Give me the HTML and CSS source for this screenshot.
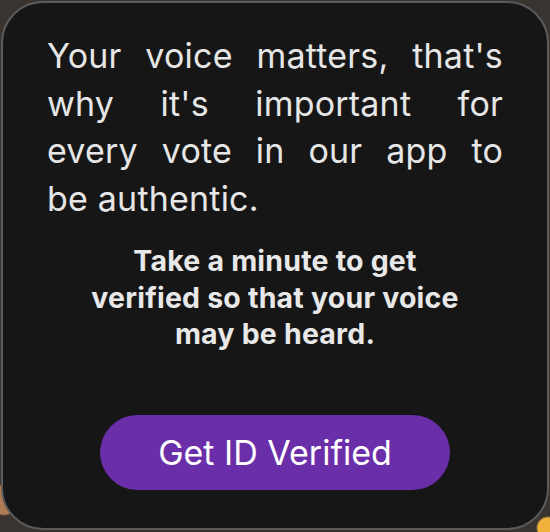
FILE: index.html
```html
<!DOCTYPE html>
<html>
<head>
<meta charset="utf-8">
<link rel="stylesheet" href="styles.css">
</head>
<body>
<div class="backdrop">
  <div class="card">
    <p class="lead">
      <span class="line">Your voice matters, that's</span>
      <span class="line">why it's important for</span>
      <span class="line">every vote in our app to</span>
      <span class="line last">be authentic.</span>
    </p>
    <p class="sub">Take a minute to get verified so that your voice may be heard.</p>
    <button class="cta">Get ID Verified</button>
  </div>
</div>
</body>
</html>
```
FILE: styles.css
```css
html, body {
  margin: 0;
  padding: 0;
  width: 550px;
  height: 532px;
  overflow: hidden;
  background: #2b2622;
}
.backdrop {
  width: 550px;
  height: 532px;
  padding: 1px 1px 1px 1px;
  box-sizing: border-box;
  background:
    radial-gradient(circle at 4px 500px, #b07a52 0, #b07a52 14px, transparent 16px),
    radial-gradient(circle at 548px 528px, #f0b23a 0, #f0b23a 10px, transparent 12px),
    #3a3431;
}
.card {
  box-sizing: border-box;
  height: 529px;
  border: 2px solid #5b5b5b;
  border-radius: 42px;
  background: #161616;
  display: flex;
  flex-direction: column;
  align-items: center;
  padding: 29px 44px 0 44px;
  font-family: Inter, "Noto Sans", sans-serif;
  color: #e6e6e6;
}
.lead {
  margin: 0;
  width: 100%;
  font-size: 34px;
  line-height: 47.5px;
  font-weight: 400;
  letter-spacing: 0.2px;
}
.line {
  display: block;
  white-space: nowrap;
  text-align: justify;
  text-align-last: justify;
}
.line.last {
  text-align-last: left;
}
.sub {
  margin: 21px 0 0;
  max-width: 380px;
  font-size: 28.5px;
  line-height: 36.7px;
  font-weight: 700;
  letter-spacing: 0.2px;
  text-align: center;
  color: #e8e8e8;
}
.cta {
  margin-top: 62px;
  width: 350px;
  height: 75px;
  border: none;
  border-radius: 38px;
  background: #6a2ea8;
  color: #ffffff;
  font-family: Inter, "Noto Sans", sans-serif;
  font-size: 34px;
  font-weight: 400;
  padding: 0;
}
```
